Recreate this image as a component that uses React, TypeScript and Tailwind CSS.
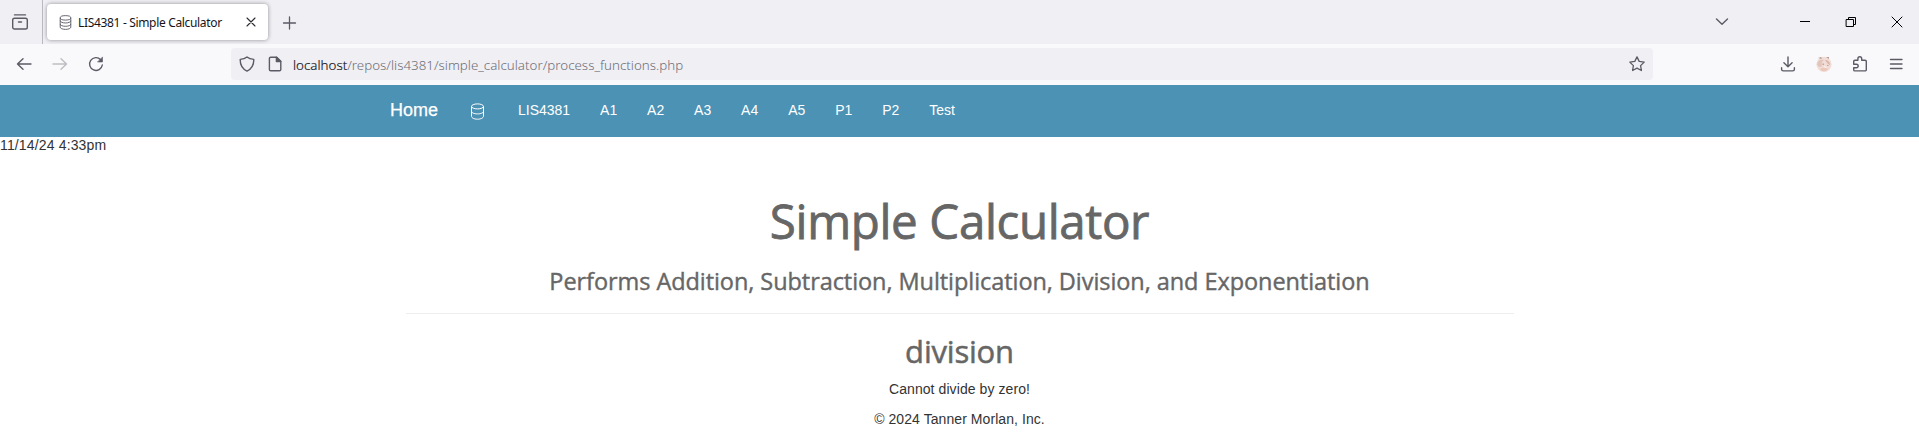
import React from "react";

type IconProps = { className?: string; children: React.ReactNode; w?: number };

function Icon({ className = "", children, w = 1.3 }: IconProps) {
  return (
    <svg
      viewBox="0 0 16 16"
      className={`h-4 w-4 shrink-0 ${className}`}
      fill="none"
      stroke="currentColor"
      strokeWidth={w}
      strokeLinecap="round"
      strokeLinejoin="round"
    >
      {children}
    </svg>
  );
}

function TabDatabaseIcon() {
  return (
    <svg viewBox="0 0 14 16" className="h-[15px] w-[13px] shrink-0" fill="none" stroke="currentColor" strokeWidth={1}>
      <ellipse cx="7" cy="3" rx="5.7" ry="2.4" />
      <path d="M1.3 3v10c0 1.4 2.5 2.4 5.7 2.4s5.7-1 5.7-2.4V3" />
      <path d="M1.3 6c0 1.5 2.5 2.5 5.7 2.5S12.700 7.500 12.700 6M1.300 9.600c0 1.500 2.500 2.500 5.700 2.500s5.700-1 5.700-2.500" />
    </svg>
  );
}

function NavDatabaseIcon() {
  return (
    <svg viewBox="0 0 15 17" className="mt-[3px] h-[17px] w-[15px] shrink-0" fill="none" stroke="currentColor" strokeWidth={1}>
      <ellipse cx="7.500" cy="3.400" rx="6" ry="2.500" />
      <path d="M1.500 3.400v9.800c0 1.700 2.700 3 6 3s6-1.300 6-3V3.400" />
      <path d="M1.500 8.200c0 1.600 2.700 2.700 6 2.700s6-1.100 6-2.700" />
    </svg>
  );
}

function TabBar() {
  return (
    <div className="flex h-11 bg-[#f0eff4] text-[#5b5b66]">
      <div className="flex h-11 w-[43px] items-center border-r border-[#b9b9c1] pl-3">
        <Icon w={1.4}>
          <rect x="0.7" y="4.200" width="14.600" height="10.800" rx="1.800" />
          <path d="M2.500 0.900h11M6.500 8h3" />
        </Icon>
      </div>
      <div className="ml-1 mt-1 flex h-9 w-[221px] items-center rounded bg-white pl-3 shadow-[0_0_4px_rgba(0,0,0,0.4)]">
        <TabDatabaseIcon />
        <span className="ml-[6px] mt-px w-[150px] whitespace-nowrap font-['Noto_Sans',sans-serif] text-[12px] leading-4 tracking-[-0.330px] text-[#15141a]">
          LIS4381 - Simple Calculator
        </span>
        <Icon className="ml-[15px] text-[#2b2a33]" w={1.1}>
          <path d="M4 4l8 8M12 4l-8 8" />
        </Icon>
      </div>
      <div className="ml-[14px] flex items-center pt-px">
        <Icon w={1.3}>
          <path d="M7.500 2v12M1.500 8h12" />
        </Icon>
      </div>
      <div className="ml-auto flex items-center pr-[14px]">
        <Icon className="mr-[67px]" w={1.4}>
          <path d="M2.500 5L8 10.300 13.500 5" />
        </Icon>
        <Icon className="mr-[30px] text-black" w={1}>
          <path d="M3.500 7.500h9" strokeLinecap="square" />
        </Icon>
        <Icon className="mr-[30px] text-black" w={1}>
          <path d="M3.500 5.500h7v7h-7zM5.500 5.500v-2h7v7h-2" strokeLinejoin="miter" />
        </Icon>
        <Icon className="text-black" w={1}>
          <path d="M3 3l10 10M13 3L3 13" />
        </Icon>
      </div>
    </div>
  );
}

function Toolbar() {
  return (
    <div className="flex h-[41px] items-center bg-[#f9f9fb] pb-px text-[#5b5b66]">
      <div className="flex w-[231px] items-center gap-5 pl-4">
        <Icon w={1.4}>
          <path d="M15 8H1.500M7 2.700L1.500 8 7 13.300" />
        </Icon>
        <Icon className="text-[#bdbdc3]" w={1.4}>
          <path d="M1 8h13.500M9 2.700L14.500 8 9 13.300" />
        </Icon>
        <Icon w={1.4}>
          <path d="M14.300 9A6.400 6.400 0 1 1 12.700 3.700" />
          <path d="M14.500 1.300v4.700H9.800z" fill="currentColor" strokeWidth={0.6} />
        </Icon>
      </div>
      <div className="flex h-8 w-[1422px] items-center rounded bg-[#f0eff4] pl-2">
        <Icon w={1.4}>
          <path d="M8 0.900c1.900 1.700 4 2.300 6.800 2.500.1 5-1.600 9.300-6.800 11.700C2.800 12.700 1.100 8.400 1.200 3.400 4 3.200 6.100 2.600 8 0.900z" />
        </Icon>
        <Icon className="ml-3" w={1.4}>
          <path d="M3.700 1.200h6L13.800 5.300v8.200a1.300 1.300 0 0 1-1.300 1.300H3.700a1.300 1.300 0 0 1-1.300-1.300v-11a1.300 1.300 0 0 1 1.300-1.300z" />
          <path d="M9.400 1.200v4.300h4.300z" fill="currentColor" />
        </Icon>
        <span className="ml-[10px] mt-0.5 whitespace-nowrap font-['Noto_Sans',sans-serif] text-[13.300px] font-light leading-5 tracking-[0.020px] text-[#6e6e76]">
          <span className="text-[#15141a] [-webkit-text-stroke:0.15px_#15141a]">localhost</span>
          /repos/lis4381/simple_calculator/process_functions.php
        </span>
        <Icon className="ml-auto mr-2" w={1.3}>
          <path d="M8 0.900l2.200 4.500 5 .7-3.600 3.500.8 4.900L8 12.200l-4.400 2.300.8-4.900L.8 6.100l5-.7z" />
        </Icon>
      </div>
      <div className="ml-auto flex items-center gap-5 pr-[15px]">
        <Icon w={1.4}>
          <path d="M8 .9v9.600M3.900 6.700L8 10.700l4.100-4M1.600 11.700v1.500a1.700 1.700 0 0 0 1.700 1.700h9.400a1.700 1.700 0 0 0 1.700-1.700v-1.500" />
        </Icon>
        <svg viewBox="0 0 16 16" className="h-4 w-4 shrink-0">
          <circle cx="8" cy="8.300" r="7.600" fill="#f0ddd7" />
          <path d="M2 2l3-1 1 2zM10 1l3 0 0 2z" fill="#b9988f" />
          <path d="M1 8c1-4 4-5 7-4-2 1-3 3-2 6-2 2-4 1-5-2z" fill="#e3c4ba" />
          <path d="M9 4c3 0 5 2 5 5-1 0-3-2-5-5z" fill="#ddb5aa" />
          <path d="M6.500 7.500h1.500v1.500h-1.500zM11 9h1.500v1h-1.500z" fill="#cf9f94" />
          <path d="M4 13c3-2 6-1 8 0-2 3-6 3-8 0z" fill="#ecc6b9" />
          <path d="M8 10l3 1-2 1z" fill="#fff5f0" />
        </svg>
        <Icon w={1.4}>
          <path d="M1.700 6.200V5.400a1.200 1.200 0 0 1 1.200-1.200h3V2.700a1.900 1.900 0 0 1 3.800 0v1.500h3.400a1.200 1.200 0 0 1 1.200 1.200v8.300a1.200 1.200 0 0 1-1.200 1.200H2.900a1.200 1.200 0 0 1-1.200-1.200v-1.900h2.700a1.800 1.800 0 0 0 0-3.600H1.700z" />
        </Icon>
        <Icon w={1.4}>
          <path d="M2.500 3.500h11.500M2.500 8h11.500M2.500 12.500h11.500" />
        </Icon>
      </div>
    </div>
  );
}

const links = ["LIS4381", "A1", "A2", "A3", "A4", "A5", "P1", "P2", "Test"];

function SiteNav() {
  return (
    <nav className="flex h-[52px] items-center bg-[#4c92b5] pb-0.5 pl-[390px] text-white">
      <span className="w-[80px] text-[18px] leading-5 [-webkit-text-stroke:0.25px_white]">Home</span>
      <NavDatabaseIcon />
      <div className="ml-[33px] flex gap-[29.900px] text-[14px] leading-5">
        {links.map((label) => (
          <span key={label}>{label}</span>
        ))}
      </div>
    </nav>
  );
}

export default function App() {
  return (
    <div className="h-[434px] w-[1919px] overflow-hidden bg-white font-['Liberation_Sans',Arial,sans-serif] text-[14px] text-[#333]">
      <TabBar />
      <Toolbar />
      <SiteNav />
      <p className="h-5 leading-4 tracking-[0.150px]">11/14/24 4:33pm</p>
      <main className="flex flex-col items-center whitespace-nowrap">
        <h1 className="mt-[36px] h-14 font-['Open_Sans',sans-serif] text-[47.500px] leading-[55px] tracking-[-0.370px] text-[#666] [-webkit-text-stroke:0.8px_#666]">
          Simple Calculator
        </h1>
        <h3 className="mt-[16px] h-8 font-['Open_Sans',sans-serif] text-[23.500px] leading-8 tracking-[-0.065px] text-[#666] [-webkit-text-stroke:0.4px_#666]">
          Performs Addition, Subtraction, Multiplication, Division, and Exponentiation
        </h3>
        <hr className="mt-[16px] w-[1108px] border-t border-[#eee]" />
        <h2 className="mt-[17px] h-10 font-['Open_Sans',sans-serif] text-[31px] leading-10 tracking-[-0.200px] text-[#666] [-webkit-text-stroke:0.5px_#666]">
          division
        </h2>
        <p className="mt-[8px] h-5 leading-5 tracking-[0.080px]">Cannot divide by zero!</p>
        <p className="mt-[10px] h-5 leading-5 tracking-[0.070px]">© 2024 Tanner Morlan, Inc.</p>
      </main>
    </div>
  );
}
